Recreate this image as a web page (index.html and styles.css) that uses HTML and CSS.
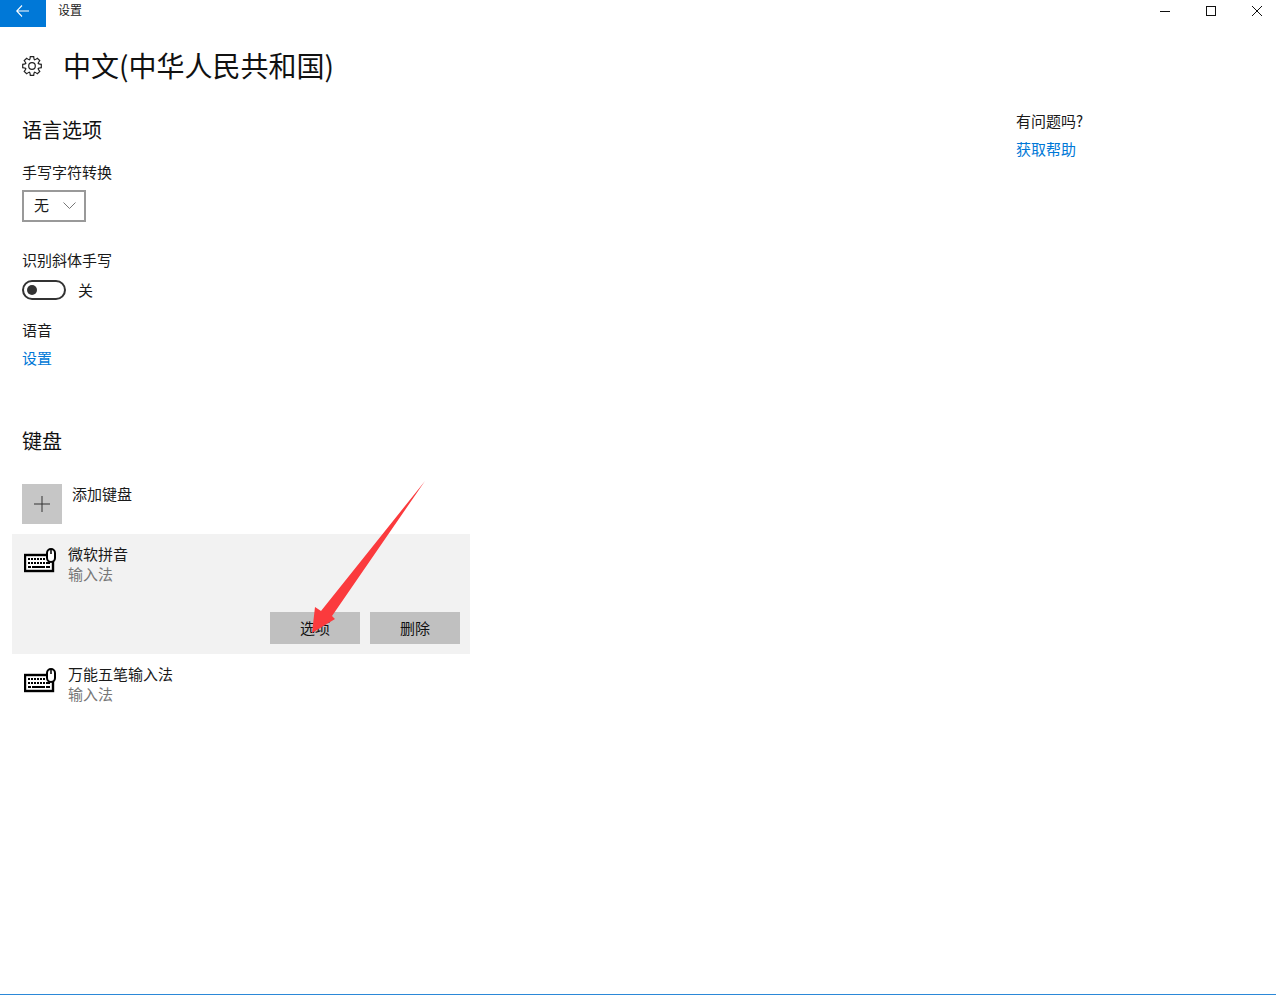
FILE: index.html
```html
<!DOCTYPE html>
<html lang="zh-CN">
<head>
<meta charset="utf-8">
<title>设置</title>
<link rel="stylesheet" href="styles.css">
</head>
<body>
<div class="window">
  <header class="titlebar">
    <div class="back">
      <svg width="13" height="12" viewBox="0 0 13 12"><path d="M13 6H1M6 .5L.7 6 6 11.500" fill="none" stroke="#fff" stroke-width="1.100"/></svg>
    </div>
    <span class="app-name">设置</span>
    <div class="controls">
      <div class="ctl"><svg width="10" height="10" viewBox="0 0 10 10"><path d="M0 5.500h10" stroke="#111" stroke-width="1"/></svg></div>
      <div class="ctl"><svg width="10" height="10" viewBox="0 0 10 10"><rect x=".5" y=".5" width="9" height="9" fill="none" stroke="#111"/></svg></div>
      <div class="ctl"><svg width="10" height="10" viewBox="0 0 10 10"><path d="M0 0l10 10M10 0L0 10" stroke="#111" stroke-width="1"/></svg></div>
    </div>
  </header>

  <div class="heading">
    <svg class="gear" width="20" height="20" viewBox="0 0 20 20">
      <defs><path id="tooth" d="M7.400 3.720Q8 3.300 8.100 2.200L8.300.7H11.700L11.900 2.200Q12 3.300 12.600 3.720"/></defs>
      <g fill="none" stroke="#222" stroke-width="1.200" stroke-linecap="round">
        <use href="#tooth"/>
        <use href="#tooth" transform="rotate(45 10 10)"/>
        <use href="#tooth" transform="rotate(90 10 10)"/>
        <use href="#tooth" transform="rotate(135 10 10)"/>
        <use href="#tooth" transform="rotate(180 10 10)"/>
        <use href="#tooth" transform="rotate(225 10 10)"/>
        <use href="#tooth" transform="rotate(270 10 10)"/>
        <use href="#tooth" transform="rotate(315 10 10)"/>
        <circle cx="10" cy="10" r="3.300"/>
      </g>
    </svg>
    <h1 class="page-title">中文(中华人民共和国)</h1>
  </div>

  <div class="content">
    <main class="main">
      <h2 class="section-title">语言选项</h2>
      <div class="label label-first">手写字符转换</div>
      <div class="select"><span>无</span>
        <svg width="13" height="7" viewBox="0 0 13 7"><path d="M.5.5L6.500 6.500l6-6" fill="none" stroke="#777" stroke-width="1"/></svg>
      </div>
      <div class="label label-italic">识别斜体手写</div>
      <div class="toggle-row">
        <div class="toggle"><i class="knob"></i></div>
        <span>关</span>
      </div>
      <div class="label label-speech">语音</div>
      <a class="link link-settings">设置</a>

      <h2 class="section-title keyboard-title">键盘</h2>
      <div class="add-row">
        <div class="add-tile">
          <svg width="16" height="16" viewBox="0 0 16 16"><path d="M8 0v16M0 8h16" stroke="#333" stroke-width="1"/></svg>
        </div>
        <span class="add-text">添加键盘</span>
      </div>

      <section class="ime ime-selected">
        <div class="ime-head">
          <svg class="kbd" width="32" height="26" viewBox="0 0 32 26">
            <use href="#kbd-art"/>
          </svg>
          <div>
            <div class="ime-name">微软拼音</div>
            <div class="ime-sub">输入法</div>
          </div>
        </div>
        <div class="ime-actions">
          <div class="btn">选项</div>
          <div class="btn">删除</div>
        </div>
      </section>

      <section class="ime">
        <div class="ime-head">
          <svg class="kbd" width="32" height="26" viewBox="0 0 32 26">
            <g id="kbd-art">
              <rect x="1" y="7" width="28" height="16" fill="#fff" stroke="#000" stroke-width="2.400"/>
              <path d="M4 11h2M7 11h2M10 11h2M13 11h2M16 11h2M19 11h2M4 15h2M7 15h2M10 15h2M13 15h2M16 15h2M19 15h2M22 15h4M4 19h3M8 19h13M22 19h4" stroke="#000" stroke-width="2"/>
              <rect x="23" y="1" width="8" height="13" rx="4" fill="#fff" stroke="#000" stroke-width="2"/>
              <path d="M27 2v4" stroke="#000" stroke-width="1.500"/>
            </g>
          </svg>
          <div>
            <div class="ime-name">万能五笔输入法</div>
            <div class="ime-sub">输入法</div>
          </div>
        </div>
      </section>
    </main>

    <aside class="aside">
      <div class="label">有问题吗?</div>
      <a class="link link-help">获取帮助</a>
    </aside>
  </div>

  <svg class="arrow" width="130" height="165" viewBox="0 0 130 165">
    <path d="M128 1L35 136 38 139 15 153 18 127 24 131Z" fill="#fb3a3d"/>
  </svg>
</div>
</body>
</html>
```
FILE: styles.css
```css
* { box-sizing: border-box; }
html, body { margin: 0; padding: 0; background: #fff; }
body {
  font-family: "Noto Sans CJK SC", "Liberation Sans", sans-serif;
  font-size: 15px;
  line-height: 20px;
  color: #1a1a1a;
}
.window {
  position: relative;
  height: 995px;
  border-bottom: 1px solid #2b88d8;
  overflow: hidden;
}
.titlebar { display: flex; align-items: flex-start; height: 27px; }
.back {
  width: 46px; height: 27px;
  background: #0078d7;
  display: flex; align-items: center; justify-content: center;
  padding-bottom: 5px;
  padding-right: 2px;
}
.app-name { margin-left: 12px; font-size: 12px; line-height: 20px; }
.controls { margin-left: auto; margin-right: -4px; display: flex; }
.ctl { width: 46px; height: 22px; display: flex; align-items: center; justify-content: center; }

.heading {
  display: flex; align-items: center;
  height: 40px;
  margin-top: 19px;
  padding-left: 22px;
}
.gear { flex: none; }
.page-title { margin: -1px 0 1px 21px; font-size: 28px; line-height: 40px; font-weight: 400; color: #111; }

.content { display: flex; }
.main { width: 470px; padding-left: 12px; }
.aside { margin-left: 546px; padding-top: 25px; }
.section-title { margin: 0 0 0 10px; font-size: 20px; line-height: 28px; font-weight: 400; color: #111; }
.main > .section-title:first-child { margin-top: 30px; }
.label { line-height: 20px; }
.main > .label { margin-left: 10px; }
.label-first { margin-top: 18px; }
.select {
  margin: 8px 0 0 10px;
  width: 64px; height: 32px;
  border: 2px solid #999;
  display: flex; align-items: center; justify-content: space-between;
  padding: 0 8px 2px 10px;
}
.label-italic { margin-top: 28px; }
.toggle-row { display: flex; align-items: center; margin: 10px 0 0 10px; height: 20px; }
.toggle {
  width: 44px; height: 20px;
  border: 2px solid #333;
  border-radius: 10px;
  display: flex; align-items: center;
  padding-left: 3px;
  margin-right: 12px;
}
.knob { width: 10px; height: 10px; border-radius: 50%; background: #333; display: block; }
.label-speech { margin-top: 20px; }
.link { display: block; color: #0078d7; line-height: 20px; }
.link-settings { margin: 8px 0 0 10px; }
.link-help { margin-top: 8px; }
.keyboard-title { margin-top: 59px; }
.add-row { display: flex; margin: 29px 0 0 10px; height: 40px; }
.add-tile {
  width: 40px; height: 40px;
  background: #c6c6c6;
  display: flex; align-items: center; justify-content: center;
}
.add-text { margin-left: 10px; }
.ime { margin-top: 10px; height: 60px; padding: 10px 10px 0 12px; }
.ime + .ime { margin-top: 0; }
.ime-selected { height: 120px; background: #f2f2f2; }
.ime-head { display: flex; }
.kbd { flex: none; margin: 4px 12px 0 0; }
.ime-name { line-height: 20px; }
.ime-sub { color: #777; line-height: 20px; }
.ime-actions { display: flex; justify-content: flex-end; gap: 10px; margin-top: 28px; }
.btn {
  width: 90px; height: 32px;
  background: #c0c0c0;
  display: flex; align-items: center; justify-content: center;
  color: #111;
}
.arrow { position: absolute; left: 297px; top: 480px; }
```
